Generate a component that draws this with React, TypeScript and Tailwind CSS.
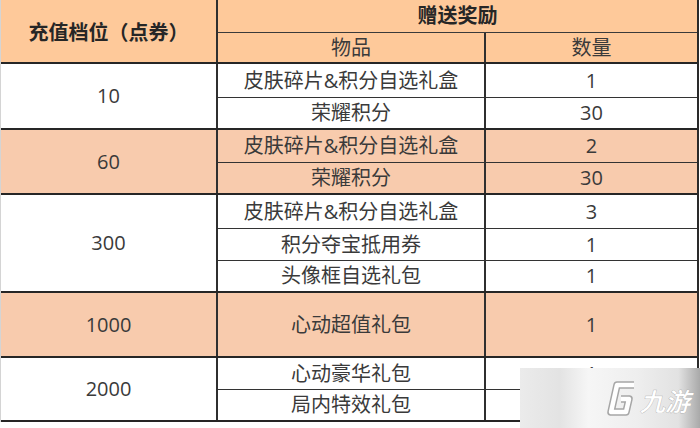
import React from "react";

type Group = {
  amount: string;
  hl: boolean;
  rows: { name: string; qty: string; h: number }[];
};

const groups: Group[] = [
  {
    amount: "10",
    hl: false,
    rows: [
      { name: "皮肤碎片&积分自选礼盒", qty: "1", h: 34 },
      { name: "荣耀积分", qty: "30", h: 30 },
    ],
  },
  {
    amount: "60",
    hl: true,
    rows: [
      { name: "皮肤碎片&积分自选礼盒", qty: "2", h: 33 },
      { name: "荣耀积分", qty: "30", h: 30 },
    ],
  },
  {
    amount: "300",
    hl: false,
    rows: [
      { name: "皮肤碎片&积分自选礼盒", qty: "3", h: 34 },
      { name: "积分夺宝抵用券", qty: "1", h: 32 },
      { name: "头像框自选礼包", qty: "1", h: 30 },
    ],
  },
  {
    amount: "1000",
    hl: true,
    rows: [{ name: "心动超值礼包", qty: "1", h: 63 }],
  },
  {
    amount: "2000",
    hl: false,
    rows: [
      { name: "心动豪华礼包", qty: "1", h: 32 },
      { name: "局内特效礼包", qty: "1", h: 30 },
    ],
  },
];

const G_PATH = "M114 17 L97 17 L91 44 L106 44 L109 31 L101 31";

export default function App() {
  return (
    <div
      className="relative w-[700px] h-[428px] overflow-hidden bg-white text-[20px] leading-none text-[#3a3a3a]"
      style={{ fontFamily: '"Open Sans", "Noto Sans CJK SC", sans-serif' }}
    >
      <div className="w-[699px] border-l border-l-[#d4d4d4] border-r-2 border-r-[#2a2a2a]">
        {/* Header */}
        <div className="flex h-[64px] bg-[#fec99a] border-b-2 border-b-[#262626]">
          <div className="w-[215px] flex items-center justify-center pt-1 font-bold text-[#262626]">
            充值档位（点券）
          </div>
          <div className="flex-1 flex flex-col border-l-2 border-l-[#2f2f2f]">
            <div className="h-[33px] flex items-center justify-center border-b border-b-[#3a3a3a] font-bold text-[#262626]">
              赠送奖励
            </div>
            <div className="flex-1 flex">
              <div className="w-[266px] flex items-center justify-center">物品</div>
              <div className="flex-1 flex items-center justify-center border-l-2 border-l-[#2f2f2f]">
                数量
              </div>
            </div>
          </div>
        </div>

        {groups.map((g) => (
          <div
            key={g.amount}
            className={`flex border-b-2 border-b-[#262626] ${g.hl ? "bg-[#f8cbad]" : "bg-white"}`}
          >
            <div className="w-[215px] flex items-center justify-center">{g.amount}</div>
            <div className="flex-1 flex flex-col border-l-2 border-l-[#2f2f2f]">
              {g.rows.map((r, i) => (
                <div
                  key={i}
                  className={`flex ${i < g.rows.length - 1 ? "border-b border-b-[#333333]" : ""}`}
                  style={{ height: r.h }}
                >
                  <div className="w-[266px] flex items-center justify-center">{r.name}</div>
                  <div className="flex-1 flex items-center justify-center border-l-2 border-l-[#2f2f2f]">
                    {r.qty}
                  </div>
                </div>
              ))}
            </div>
          </div>
        ))}
      </div>

      {/* Watermark */}
      <div className="absolute right-0 bottom-0 w-[180px] h-[60px] bg-[linear-gradient(90deg,#ebebeb_0%,#e3e3e3_22%,#f6f6f6_38%,#eeeeee_65%,#e2e2e2_88%,#a9a9a9_100%)]">
        <svg width="180" height="60" viewBox="0 0 180 60" className="block">
          <path d={G_PATH} fill="none" stroke="#a6a6a6" strokeWidth="7.5" strokeLinejoin="round" />
          <path d={G_PATH} fill="none" stroke="#ffffff" strokeWidth="4.5" strokeLinejoin="round" />
          <text
            x="120"
            y="43"
            fontSize="25"
            fontStyle="italic"
            fill="#ffffff"
            stroke="#b0b0b0"
            strokeWidth="0.7"
            paintOrder="stroke"
            style={{ fontFamily: '"Noto Sans CJK SC", sans-serif', fontWeight: 500 }}
          >
            九游
          </text>
        </svg>
      </div>
    </div>
  );
}
